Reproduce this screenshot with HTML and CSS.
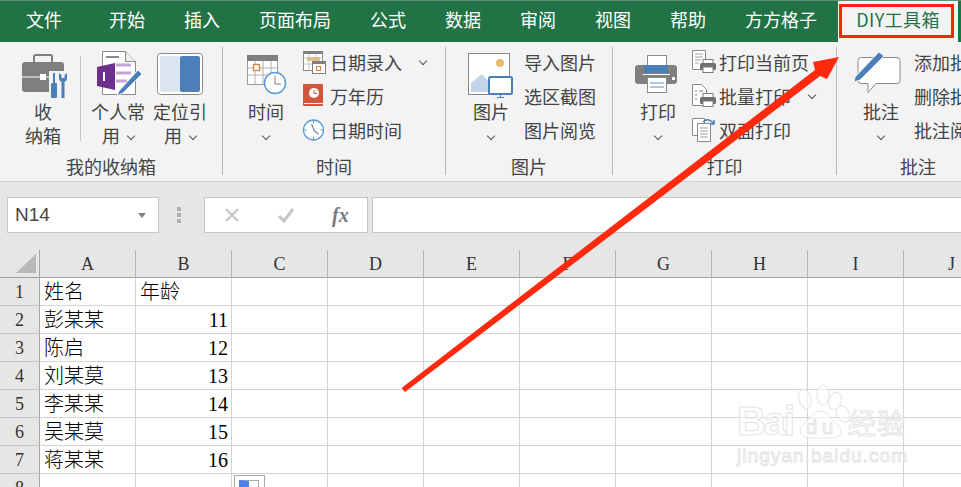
FILE: index.html
```html
<!DOCTYPE html>
<html lang="zh-CN">
<head>
<meta charset="UTF-8" />
<meta name="viewport" content="width=device-width, initial-scale=1" />
<title>Excel - DIY工具箱</title>
<link rel="stylesheet" href="styles.css">
</head>
<body>
  <svg class="defs" width="0" height="0">
    <symbol id="mini-printer" viewBox="0 0 16 14">
      <rect x="3" y="0.5" width="10" height="5" fill="#fff" stroke="#7f7f7f"/>
      <rect x="0" y="4" width="16" height="7" rx="1.5" fill="#6f6f6f"/>
      <rect x="3" y="8" width="10" height="5.5" fill="#fff" stroke="#7f7f7f"/>
    </symbol>
  </svg>

  <div class="tabs">
    <span class="tab tab-file">文件</span>
    <span class="tab">开始</span>
    <span class="tab">插入</span>
    <span class="tab">页面布局</span>
    <span class="tab">公式</span>
    <span class="tab">数据</span>
    <span class="tab">审阅</span>
    <span class="tab">视图</span>
    <span class="tab">帮助</span>
    <span class="tab">方方格子</span>
    <span class="tab active">DIY工具箱<i class="red-box"></i></span>
  </div>

  <div class="ribbon">
    <div class="group group-box">
      <div class="group-body">
        <div class="big big-wide">
          <svg class="big-icon" viewBox="0 0 46 46">
            <path d="M14 10V4.500q0-1.500 1.500-1.500h15q1.500 0 1.500 1.500V10" fill="none" stroke="#7f7f7f" stroke-width="2"/>
            <rect x="2" y="10" width="42" height="30" rx="3" fill="#7f7f7f"/>
            <path d="M2 25h42" stroke="#fff"/>
            <rect x="20" y="22" width="6" height="6" fill="#fff"/>
            <path d="M29 19h20v28H29z" fill="#f3f3f3"/>
            <path d="M34 21v10" stroke="#4a7fb8" stroke-width="2"/>
            <rect x="31" y="31" width="6" height="15" rx="1" fill="#4a7fb8"/>
            <path d="M39 21v5q0 4 4 4t4-4v-5l-2.500 2v3h-3v-3zM41.500 30h3v16h-3z" fill="#4a7fb8"/>
          </svg>
          <span>收<br>纳箱</span>
        </div>
        <div class="divider"></div>
        <div class="big">
          <svg class="big-icon" viewBox="0 0 46 46">
            <path d="M7.500-.5h23l10 10v33h-33z" fill="#fff" stroke="#8a8a8a"/>
            <path d="M30.500-.5v10h10" fill="#eee" stroke="#8a8a8a"/>
            <path d="M11 5h13" stroke="#8a8a8a" stroke-width="2"/>
            <path d="M21 13h15M21 21h15M21 29h11" stroke="#c3a4d4" stroke-width="3"/>
            <path d="M2 15l18-4v27l-18-4z" fill="#6b2f8c"/>
            <path d="M9 20v9" stroke="#fff" stroke-width="2"/>
            <path d="M24 39L43 18l4 4-19 19-6 3z" fill="#4a7fb8" stroke="#f3f3f3"/>
          </svg>
          <span>个人常<br>用<i class="chev"></i></span>
        </div>
        <div class="big">
          <svg class="big-icon" viewBox="0 0 46 46">
            <rect x="0.500" y="1.500" width="45" height="41" rx="3" fill="#fff" stroke="#8a8a8a"/>
            <rect x="3" y="4" width="21" height="36" rx="2" fill="#dce6f1"/>
            <rect x="23" y="4" width="20" height="36" rx="2" fill="#4a7fb8"/>
          </svg>
          <span>定位引<br>用<i class="chev"></i></span>
        </div>
      </div>
      <div class="group-label">我的收纳箱</div>
    </div>

    <div class="group group-time">
      <div class="group-body">
        <div class="big">
          <svg class="big-icon" viewBox="0 0 46 46">
            <rect x="4.500" y="3.500" width="30" height="29" fill="#fff" stroke="#9a9a9a"/>
            <rect x="4" y="3" width="31" height="6" fill="#7f7f7f"/>
            <path d="M4.500 16h30M4.500 23h30M12 9v24M20 9v24M28 9v24" stroke="#b0b0b0"/>
            <rect x="10.500" y="12.500" width="6" height="6" fill="#fff" stroke="#d9823b" stroke-width="1.300"/>
            <circle cx="32" cy="31" r="10.500" fill="#fff" stroke="#5b9bd5" stroke-width="1.500"/>
            <path d="M32 24v8h6" fill="none" stroke="#7f7f7f"/>
          </svg>
          <span>时间<br><i class="chev solo"></i></span>
        </div>
        <div class="small-col">
          <div class="small-row">
            <svg class="small-icon" viewBox="0 0 24 24">
              <rect x="0.500" y="1.500" width="19" height="19" fill="#fff" stroke="#8a8a8a"/>
              <rect x="0" y="1" width="20" height="3" fill="#7f7f7f"/>
              <rect x="4" y="7" width="13" height="4" fill="#e8c07a"/>
              <path d="M0 8h20M0 14h20M6 4v16M13 4v16" stroke="#b5b5b5" stroke-width=".7"/>
              <rect x="9.500" y="11.500" width="13" height="12" fill="#fff" stroke="#7f7f7f"/>
              <rect x="9" y="11" width="14" height="3" fill="#7f7f7f"/>
              <rect x="13.500" y="16.500" width="4" height="4" fill="#fff" stroke="#d9823b"/>
            </svg>
            <span>日期录入</span><i class="chev row-chev"></i>
          </div>
          <div class="small-row">
            <svg class="small-icon" viewBox="0 0 24 24">
              <rect x="0" y="0" width="20" height="22" rx="1" fill="#d4553a"/>
              <path d="M1 19.500h19" stroke="#f3f3f3"/>
              <circle cx="11" cy="9" r="5" fill="#fff"/>
              <path d="M11 6v3.500h3" fill="none" stroke="#d4553a"/>
            </svg>
            <span>万年历</span>
          </div>
          <div class="small-row">
            <svg class="small-icon" viewBox="0 0 24 24">
              <circle cx="10.500" cy="12" r="10" fill="#fff" stroke="#5b9bd5" stroke-width="1.300"/>
              <path d="M10.500 2v3M10.500 19v3M.5 12h3M17.500 12h3" stroke="#5b9bd5"/>
              <path d="M8.500 6l3 7 4 3" fill="none" stroke="#6f8fae" stroke-width="1.200"/>
            </svg>
            <span>日期时间</span>
          </div>
        </div>
      </div>
      <div class="group-label">时间</div>
    </div>

    <div class="group group-pic">
      <div class="group-body">
        <div class="big">
          <svg class="big-icon" viewBox="0 0 46 46">
            <rect x="0.500" y="1.500" width="41" height="41" fill="#fff" stroke="#8a8a8a"/>
            <circle cx="32" cy="11" r="4" fill="#e8bc6e"/>
            <path d="M3 40V31l11-9 7 8v10z" fill="#c3d5e8"/>
            <rect x="21" y="25" width="23" height="17" rx="1.500" fill="#fff" stroke="#4a7fb8" stroke-width="2"/>
            <path d="M32.500 42v3M29 45.500h7" stroke="#4a7fb8"/>
          </svg>
          <span>图片<br><i class="chev solo"></i></span>
        </div>
        <div class="small-col text-col">
          <div class="small-row"><span>导入图片</span></div>
          <div class="small-row"><span>选区截图</span></div>
          <div class="small-row"><span>图片阅览</span></div>
        </div>
      </div>
      <div class="group-label">图片</div>
    </div>

    <div class="group group-print">
      <div class="group-body">
        <div class="big">
          <svg class="big-icon" viewBox="0 0 46 46">
            <rect x="12.500" y="3.500" width="19" height="14" fill="#fff" stroke="#8a8a8a"/>
            <rect x="0" y="13" width="42" height="19" rx="3" fill="#7f7f7f"/>
            <rect x="9" y="13" width="24" height="8" fill="#4a7fb8"/>
            <path d="M8 22.500h27" stroke="#fff"/>
            <rect x="37" y="25" width="3" height="3" fill="#fff"/>
            <rect x="12.500" y="25.500" width="19" height="15" fill="#fff" stroke="#8a8a8a"/>
            <path d="M15 31h14M15 35h14" stroke="#5b8fc5"/>
          </svg>
          <span>打印<br><i class="chev solo"></i></span>
        </div>
        <div class="small-col print-col">
          <div class="small-row">
            <svg class="small-icon" viewBox="0 0 24 24">
              <path d="M.5.500h13v19H.5z" fill="#fff" stroke="#8a8a8a"/>
              <path d="M3 4h8M3 7h8M3 10h6M3 13h4" stroke="#a0a0a0"/>
              <use href="#mini-printer" x="8" y="9" width="16" height="14"/>
            </svg>
            <span>打印当前页</span>
          </div>
          <div class="small-row">
            <svg class="small-icon" viewBox="0 0 24 24">
              <path d="M.5.500h9l5 5v16H.5z" fill="#fff" stroke="#8a8a8a"/>
              <path d="M3 7h2M3 11h2M3 15h2M7 7h4" stroke="#7f7f7f"/>
              <use href="#mini-printer" x="8" y="9" width="16" height="14"/>
            </svg>
            <span>批量打印</span><i class="chev row-chev print-chev"></i>
          </div>
          <div class="small-row">
            <svg class="small-icon" viewBox="0 0 24 24">
              <path d="M.5.500h12v17H.5z" fill="#fff" stroke="#8a8a8a"/>
              <path d="M5.500 5.500h13v18h-13z" fill="#fff" stroke="#8a8a8a"/>
              <path d="M8 10h8M8 13h8M8 16h8M8 19h8" stroke="#a0a0a0"/>
              <path d="M11 4q5-5 10 1M22 2v4h-4" fill="none" stroke="#4a7fb8" stroke-width="1.500"/>
            </svg>
            <span>双面打印</span>
          </div>
        </div>
      </div>
      <div class="group-label">打印</div>
    </div>

    <div class="group group-note">
      <div class="group-body">
        <div class="big">
          <svg class="big-icon" viewBox="0 0 46 46">
            <path d="M3 5.500h36q3 0 3 3v20q0 3-3 3H18l-8 9v-9H3q-3 0-3-3v-20q0-3 3-3z" fill="#fff" stroke="#8a8a8a"/>
            <path d="M-3 25L18 3l3-3 5 4-3 3L2 28l-6 2z" fill="#4a7fb8" stroke="#f3f3f3"/>
          </svg>
          <span>批注<br><i class="chev solo"></i></span>
        </div>
        <div class="small-col text-col">
          <div class="small-row"><span>添加批注</span></div>
          <div class="small-row"><span>删除批注</span></div>
          <div class="small-row"><span>批注阅览</span></div>
        </div>
      </div>
      <div class="group-label">批注</div>
    </div>
  </div>

  <div class="formula-bar">
    <div class="name-box"><span>N14</span><i class="caret"></i></div>
    <div class="grip"><i></i><i></i><i></i></div>
    <div class="fx-box">
      <svg class="fx-mark" viewBox="0 0 16 16"><path d="M2 2l12 12M14 2L2 14" stroke="#c6c6c6" stroke-width="2.200"/></svg>
      <svg class="fx-mark" viewBox="0 0 16 16"><path d="M1 9l5 5L15 2" fill="none" stroke="#c6c6c6" stroke-width="3"/></svg>
      <span class="fx">fx</span>
    </div>
    <div class="formula-input"></div>
  </div>

  <table class="sheet">
    <tr class="head">
      <th class="corner"><svg width="39" height="27" viewBox="0 0 39 27"><path d="M36 4v19H16z" fill="#b8b8b8"/></svg></th>
      <th>A</th><th>B</th><th>C</th><th>D</th><th>E</th><th>F</th><th>G</th><th>H</th><th>I</th><th>J</th>
    </tr>
    <tr><th>1</th><td>姓名</td><td>年龄</td><td></td><td></td><td></td><td></td><td></td><td></td><td></td><td></td></tr>
    <tr><th>2</th><td>彭某某</td><td class="num">11</td><td></td><td></td><td></td><td></td><td></td><td></td><td></td><td></td></tr>
    <tr><th>3</th><td>陈启</td><td class="num">12</td><td></td><td></td><td></td><td></td><td></td><td></td><td></td><td></td></tr>
    <tr><th>4</th><td>刘某莫</td><td class="num">13</td><td></td><td></td><td></td><td></td><td></td><td></td><td></td><td></td></tr>
    <tr><th>5</th><td>李某某</td><td class="num">14</td><td></td><td></td><td></td><td></td><td></td><td></td><td></td><td></td></tr>
    <tr><th>6</th><td>吴某莫</td><td class="num">15</td><td></td><td></td><td></td><td></td><td></td><td></td><td></td><td></td></tr>
    <tr><th>7</th><td>蒋某某</td><td class="num">16</td><td></td><td></td><td></td><td></td><td></td><td></td><td></td><td></td></tr>
    <tr><th>8</th><td></td><td></td><td class="paste-cell"><div class="paste"><i></i></div></td><td></td><td></td><td></td><td></td><td></td><td></td><td></td></tr>
  </table>

  <!-- watermark -->
  <svg class="watermark" viewBox="0 0 175 85">
    <g fill="rgba(255,255,255,.6)" stroke="#e4e4e4">
      <text x="2" y="53" class="wm-big" textLength="58">Bai</text>
      <ellipse cx="70" cy="17" rx="6" ry="10" transform="rotate(-15 70 17)"/>
      <ellipse cx="88" cy="13" rx="6" ry="10"/>
      <ellipse cx="100" cy="19" rx="6" ry="9" transform="rotate(20 100 19)"/>
      <ellipse cx="108" cy="32" rx="6" ry="9" transform="rotate(-30 108 32)"/>
      <path d="M85 29c8 0 10 8 17 13 8 7 3 14-6 14H75c-10 0-13-9-6-14 7-5 9-13 16-13z"/>
      <text x="71" y="52" class="wm-du" textLength="27">du</text>
      <text x="113" y="52" class="wm-cn" textLength="57">经验</text>
      <text x="2" y="80" class="wm-url" textLength="170">jingyan.baidu.com</text>
    </g>
  </svg>

  <!-- red arrow pointing at the tab -->
  <svg class="arrow" viewBox="0 0 961 487">
    <path d="M401.500 388L815 70l-2-8 26-5-12 22-7-3L405 392z" fill="#ff2a0e"/>
  </svg>
</body>
</html>
```

FILE: styles.css
```css
* {
  box-sizing: border-box;
}
html, body {
  margin: 0;
  width: 961px;
  height: 487px;
  overflow: hidden;
}
body {
  position: relative;
  background: #e6e6e6;
  color: #444;
  font-family: "Noto Sans CJK SC", "Liberation Sans", sans-serif;
  font-size: 18px;
}
i {
  font-style: normal;
}
.defs {
  position: absolute;
}

/* tab strip */
.tabs {
  display: flex;
  gap: 39px;
  height: 42px;
  padding-left: 26px;
  background: #217346;
  border-top: 1px solid #5f8f75;
}
.tab {
  color: #fff;
  line-height: 36px;
  white-space: nowrap;
}
.tab-file {
  margin-right: 8px;
}
.tab.active {
  position: relative;
  width: 120px;
  margin-left: -18px;
  background: #f3f3f3;
  color: #217346;
  letter-spacing: .4px;
  text-align: center;
}
.red-box {
  position: absolute;
  left: 1px;
  top: 3px;
  width: 115px;
  height: 34px;
  border: 3px solid #f5260f;
}

/* ribbon */
.ribbon {
  display: flex;
  height: 140px;
  padding-top: 5px;
  background: #f3f3f3;
  border-bottom: 1px solid #d2d2d2;
  overflow: hidden;
}
.group {
  display: flex;
  flex-direction: column;
  flex: none;
  height: 128px;
  border-right: 1px solid #b9b9b9;
}
.group-box { width: 223px; padding-left: 6px; }
.group-time { width: 223px; padding-left: 12px; }
.group-pic { width: 167px; padding-left: 14px; }
.group-print { width: 224px; padding-left: 14px; }
.group-note { width: 200px; padding-left: 13px; border-right: 0; }
.group-body {
  display: flex;
  height: 108px;
}
.group-label {
  height: 20px;
  line-height: 22px;
  text-align: center;
}
.group-box .group-label { margin-left: -6px; }
.group-time .group-label { margin-left: -12px; }
.group-pic .group-label { margin-left: -14px; }
.group-print .group-label { margin-left: -14px; }
.group-note .group-label { width: 162px; margin-left: -13px; }

.big {
  display: flex;
  flex-direction: column;
  align-items: center;
  flex: none;
  width: 62px;
  padding-top: 5px;
  line-height: 24px;
  text-align: center;
  white-space: nowrap;
}
.big-wide {
  width: 74px;
}
.big-icon {
  flex: none;
  width: 46px;
  height: 46px;
  margin-bottom: 1px;
  overflow: visible;
}
.divider {
  flex: none;
  width: 1px;
  height: 85px;
  margin: 9px 6px 0 0;
  background: #c6c6c6;
}
.small-col {
  margin: -2px 0 0 6px;
}
.text-col {
  margin-left: 2px;
}
.print-col {
  margin-left: 3px;
}
.small-row {
  display: flex;
  align-items: center;
  gap: 3px;
  height: 34px;
  white-space: nowrap;
}
.small-icon {
  flex: none;
  width: 24px;
  height: 24px;
  overflow: visible;
}
.chev {
  display: inline-block;
  width: 6px;
  height: 6px;
  margin: 0 0 5px 8px;
  border-right: 1px solid #555;
  border-bottom: 1px solid #555;
  transform: rotate(45deg);
  vertical-align: middle;
}
.chev.solo {
  margin-left: 0;
}
.row-chev {
  margin: 0 0 3px 15px;
}

/* name box and formula row */
.formula-bar {
  display: flex;
  height: 36px;
  margin: 15px 0 17px;
  padding-left: 7px;
}
.name-box {
  display: flex;
  align-items: center;
  justify-content: space-between;
  width: 152px;
  padding: 0 12px 0 7px;
  background: #fff;
  border: 1px solid #c6c6c6;
  font-family: "Liberation Sans", sans-serif;
  font-size: 19px;
}
.caret {
  border-top: 5px solid #808080;
  border-left: 4px solid transparent;
  border-right: 4px solid transparent;
}
.grip {
  display: flex;
  flex-direction: column;
  justify-content: center;
  gap: 2px;
  width: 45px;
  padding-left: 18px;
}
.grip i {
  width: 4px;
  height: 4px;
  background: #b0b0b0;
}
.fx-box {
  display: flex;
  align-items: center;
  width: 164px;
  padding-left: 19px;
  background: #fff;
  border: 1px solid #c6c6c6;
}
.fx-mark {
  width: 16px;
  height: 16px;
  margin-right: 38px;
}
.fx {
  font-family: "Liberation Serif", serif;
  font-size: 20px;
  font-style: italic;
  font-weight: 700;
  color: #7a7a7a;
}
.formula-input {
  flex: 1;
  margin-left: 4px;
  background: #fff;
  border: 1px solid #c6c6c6;
  border-right: 0;
}

/* cells */
.sheet {
  table-layout: fixed;
  width: 1000px;
  border-collapse: separate;
  border-spacing: 0;
  background: #fff;
  color: #000;
  font-family: "Liberation Serif", "Noto Sans CJK SC", serif;
  font-size: 20px;
  font-weight: 300;
  line-height: 24px;
}
.sheet tr {
  height: 28px;
}
.sheet th {
  width: 96px;
  padding: 0;
  background: #e6e6e6;
  border-right: 1px solid #b4b4b4;
  border-bottom: 1px solid #c6c6c6;
  color: #333;
  font-size: 18px;
  font-weight: 400;
  text-align: center;
}
.sheet tr.head th {
  border-bottom-color: #a0a0a0;
}
.sheet th:first-child {
  width: 40px;
  border-right-color: #a8a8a8;
}
.sheet th.corner {
  line-height: 0;
}
.sheet td {
  padding: 0 3px 0 4px;
  border-right: 1px solid #d4d4d4;
  border-bottom: 1px solid #d4d4d4;
  white-space: nowrap;
}
.sheet td.num {
  text-align: right;
}
.paste-cell {
  position: relative;
}
.paste {
  position: absolute;
  left: 2px;
  top: 1px;
  width: 31px;
  height: 28px;
  background: #fff;
  border: 1px solid #a8a8a8;
}
.paste i {
  display: block;
  width: 20px;
  height: 20px;
  margin: 4px;
  border: 1px solid #a8a8a8;
  border-left: 10px solid #4a80f0;
}

/* overlays */
.watermark {
  position: absolute;
  left: 735px;
  top: 382px;
  width: 175px;
  height: 85px;
  overflow: visible;
}
.wm-big {
  font-family: "Liberation Sans", sans-serif;
  font-size: 40px;
  font-weight: 700;
}
.wm-du {
  font-family: "Liberation Sans", sans-serif;
  font-size: 20px;
}
.wm-cn {
  font-family: "Noto Sans CJK SC", sans-serif;
  font-size: 28px;
}
.wm-url {
  font-family: "Liberation Sans", sans-serif;
  font-size: 19px;
}
.arrow {
  position: absolute;
  left: 0;
  top: 0;
  width: 961px;
  height: 487px;
  pointer-events: none;
}
```
